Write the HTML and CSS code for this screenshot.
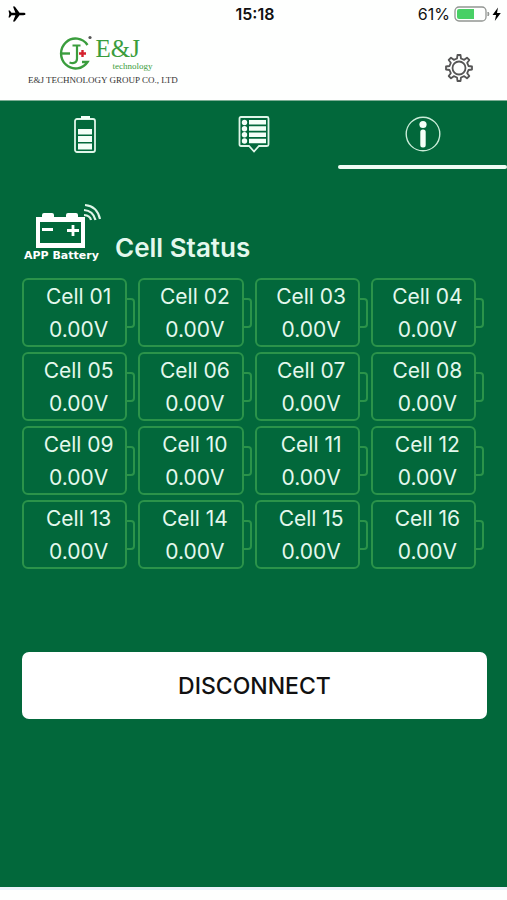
FILE: index.html
```html
<!DOCTYPE html>
<html lang="en">
<head>
<meta charset="utf-8">
<meta name="viewport" content="width=device-width, initial-scale=1">
<title>Cell Status</title>
<link rel="stylesheet" href="styles.css">
</head>
<body>
<div class="status-bar">
  <svg class="plane" viewBox="0 0 18 18" width="18" height="18" aria-label="Airplane mode"><path d="M17.5 9c0-.8-1-1.2-2-1.2h-4L6.800 1.500H5l2.400 6.300H3.500L1.800 5.500H.5L1.300 9 .5 12.500h1.300l1.700-2.300h3.900L5 16.500h1.800l4.700-6.300h4c1 0 2-.4 2-1.200z"/></svg>
  <span class="time">15:18</span>
  <span class="power">
    <span>61%</span>
    <svg viewBox="0 0 48 18" width="48" height="18" aria-label="Charging">
      <rect x="1" y="2" width="31" height="14" rx="4" fill="none" stroke="#929692" stroke-width="1.300"/>
      <path d="M3 6q0-2 2-2h15v10H5q-2 0-2-2z" fill="#48d065"/>
      <path d="M34 7q2 2 0 4z" fill="#929692" stroke="#929692"/>
      <path d="M44 2.500L38.500 10h3.600l-1.300 6 6-8h-3.800z"/>
    </svg>
  </span>
</div>
<header class="header">
  <div class="brand">
    <div class="brand-top">
      <svg viewBox="0 0 34 36" width="34" height="36" aria-hidden="true">
        <g fill="none" stroke="#3a9d3d" stroke-width="2.400">
          <path d="M28.500 10A14.500 15 0 1 0 28.500 27H23"/>
          <path d="M2 18.500h9"/>
          <path d="M13.500 10.500h8M18 10.500v13c0 4-3 5.500-7.500 4" stroke-width="2.200"/>
        </g>
        <path d="M20 18.500h7M23.500 15v7" stroke="#d4212d" stroke-width="2.400"/>
        <circle cx="31" cy="2.500" r="1.600" fill="#555"/>
      </svg>
      <div class="brand-name"><span class="ej">E&amp;J</span><span class="tech">technology</span></div>
    </div>
    <div class="company">E&amp;J TECHNOLOGY GROUP CO., LTD</div>
  </div>
  <button class="settings" type="button" aria-label="Settings">
    <svg viewBox="0 0 28 28" width="28" height="28" fill="none" stroke="#555" stroke-width="1.800" stroke-linejoin="round">
      <path d="M12 4.500L12.500 1h3l.5 3.500 3.200 1.300L22 3.700 24.300 6l-2.100 2.800L23.500 12l3.500.5v3l-3.500.5-1.300 3.200 2.100 2.800-2.300 2.300-2.800-2.100-3.200 1.300-.5 3.500h-3l-.5-3.500-3.200-1.300L6 24.300 3.700 22l2.100-2.800L4.500 16 1 15.500v-3l3.500-.5 1.300-3.200L3.700 6 6 3.700l2.800 2.100z"/>
      <circle cx="14" cy="14" r="6.500"/>
    </svg>
  </button>
</header>
<main class="main">
  <nav class="tabs">
    <a class="tab" href="#battery" aria-label="Battery">
      <svg viewBox="0 0 22 38" width="22" height="38" fill="#f4fff8">
        <rect x="1" y="4" width="20" height="33" rx="2" fill="none" stroke="#dff5e8" stroke-width="1.800"/>
        <path d="M7 1h9v3H7zM4 14h14v5.500H4zM4 21h14v6H4zM4 28.500h14v6H4z"/>
      </svg>
    </a>
    <a class="tab" href="#list" aria-label="Details">
      <svg viewBox="0 0 32 38" width="32" height="38" fill="#f4fff8">
        <path d="M3 2h26q1.500 0 1.500 1.500v26q0 1.500-1.500 1.500h-8l-5 5.500-5-5.500H3q-1.500 0-1.500-1.500v-26Q1.500 2 3 2z" fill="none" stroke="#dff5e8" stroke-width="1.800"/>
        <path d="M11 5h17v4.500H11zM11 11.300h17v4.500H11zM11 17.500h17V22H11zM11 23.800h17v4.500H11z"/>
        <circle cx="6.500" cy="7.500" r="2.700"/><circle cx="6.500" cy="13.700" r="2.700"/><circle cx="6.500" cy="19.800" r="2.700"/><circle cx="6.500" cy="26" r="2.700"/>
      </svg>
    </a>
    <a class="tab tab-active" href="#info" aria-label="Information" aria-current="page">
      <svg viewBox="0 0 36 36" width="36" height="36">
        <circle cx="18" cy="18" r="16.800" fill="none" stroke="#c9ecd8" stroke-width="1.400"/>
        <circle cx="18" cy="8.500" r="3.600" fill="#f4fff8"/>
        <rect x="15.300" y="13.500" width="5.400" height="18" rx="2.500" fill="#f4fff8"/>
      </svg>
    </a>
  </nav>
  <section class="panel">
    <div class="heading">
      <div class="app-logo">
        <svg viewBox="0 0 80 46" width="80" height="46" aria-hidden="true">
          <path d="M14 14h6v-2q0-2 2-2h8q2 0 2 2v2h12v-2q0-2 2-2h8q2 0 2 2v2h7v31H14z" fill="#fff"/>
          <path d="M18 19h41v21H18z" fill="#02683b"/>
          <path d="M20 26.500h11M45 27.500h12M51 22v11" stroke="#fff" stroke-width="2.800"/>
          <path d="M62 12q6 .5 7 5M62 7q9 .5 11.500 10M63 2q12 1 15 14" fill="none" stroke="#dff5e8" stroke-width="2.200"/>
        </svg>
        <span>APP Battery</span>
      </div>
      <h1>Cell Status</h1>
    </div>
    <ul class="cells">
      <li class="cell"><div class="body"><span>Cell 01</span><span>0.00V</span></div></li>
      <li class="cell"><div class="body"><span>Cell 02</span><span>0.00V</span></div></li>
      <li class="cell"><div class="body"><span>Cell 03</span><span>0.00V</span></div></li>
      <li class="cell"><div class="body"><span>Cell 04</span><span>0.00V</span></div></li>
      <li class="cell"><div class="body"><span>Cell 05</span><span>0.00V</span></div></li>
      <li class="cell"><div class="body"><span>Cell 06</span><span>0.00V</span></div></li>
      <li class="cell"><div class="body"><span>Cell 07</span><span>0.00V</span></div></li>
      <li class="cell"><div class="body"><span>Cell 08</span><span>0.00V</span></div></li>
      <li class="cell"><div class="body"><span>Cell 09</span><span>0.00V</span></div></li>
      <li class="cell"><div class="body"><span>Cell 10</span><span>0.00V</span></div></li>
      <li class="cell"><div class="body"><span>Cell 11</span><span>0.00V</span></div></li>
      <li class="cell"><div class="body"><span>Cell 12</span><span>0.00V</span></div></li>
      <li class="cell"><div class="body"><span>Cell 13</span><span>0.00V</span></div></li>
      <li class="cell"><div class="body"><span>Cell 14</span><span>0.00V</span></div></li>
      <li class="cell"><div class="body"><span>Cell 15</span><span>0.00V</span></div></li>
      <li class="cell"><div class="body"><span>Cell 16</span><span>0.00V</span></div></li>
    </ul>
    <button class="disconnect" type="button">DISCONNECT</button>
  </section>
</main>
<footer class="footer"></footer>
</body>
</html>
```
FILE: styles.css
```css
*,
*::after {
  box-sizing: border-box;
}

body {
  margin: 0;
  min-height: 100vh;
  display: flex;
  flex-direction: column;
  background: #fefffe;
  color: #111;
  font-family: Inter, "Liberation Sans", sans-serif;
}

svg {
  display: block;
  flex: none;
}

.status-bar {
  display: grid;
  grid-template-columns: 1fr auto 1fr;
  align-items: center;
  height: 28px;
  padding: 0 5px 0 8px;
  font-size: 16px;
}

.time {
  font-weight: 600;
}

.power {
  display: flex;
  justify-content: flex-end;
  align-items: center;
  gap: 4px;
}

.header {
  display: flex;
  justify-content: space-between;
  align-items: center;
  height: 72px;
  padding: 0 34px 0 28px;
}

.brand {
  display: flex;
  flex-direction: column;
  align-items: center;
  font-family: "Liberation Serif", serif;
  padding-bottom: 8px;
}

.brand-top {
  display: flex;
  gap: 2px;
  padding-left: 6px;
  color: #3a9d3d;
}

.brand-name {
  display: flex;
  flex-direction: column;
}

.ej {
  font-size: 25px;
  line-height: 28px;
}

.tech {
  margin: -2px 0 0 17px;
  font-size: 9px;
  line-height: 10px;
}

.company {
  margin-top: 4px;
  font-size: 9px;
  line-height: 10px;
  color: #333;
  white-space: nowrap;
}

.settings {
  padding: 0;
  margin-top: 8px;
  border: 0;
  background: none;
}

.main {
  flex: 1;
  background: #02683b;
  border-top: 1px solid #7cad94;
}

.tabs {
  display: grid;
  grid-template-columns: repeat(3, 1fr);
}

.tab {
  display: flex;
  justify-content: center;
  align-items: center;
  height: 68px;
  border-bottom: 2px solid transparent;
}

.tab-active {
  position: relative;
}

.tab-active::after {
  content: "";
  position: absolute;
  left: 0;
  right: 0;
  bottom: -2px;
  height: 4px;
  border-radius: 2px;
  background: #effcf4;
}

.panel {
  padding: 36px 20px 48px 22px;
  color: #e4f8ed;
}

.heading {
  display: flex;
  align-items: flex-end;
  gap: 13px;
  height: 58px;
}

.app-logo {
  display: flex;
  flex-direction: column;
  font: 700 11px/14px "DejaVu Sans", sans-serif;
  color: #fff;
}

.app-logo span {
  padding-left: 2px;
}

h1 {
  margin: 0;
  font-size: 26px;
  line-height: 30px;
  font-weight: 600;
}

.cells {
  display: grid;
  grid-template-columns: repeat(4, 1fr);
  row-gap: 5px;
  margin: 15px 0 0;
  padding: 0;
  list-style: none;
}

.cell {
  display: flex;
  align-items: center;
  padding-right: 3px;
}

.cell::after {
  content: "";
  width: 8px;
  height: 30px;
  border: 2px solid #2b934a;
  border-left: 0;
  border-radius: 0 4px 4px 0;
}

.body {
  flex: 1;
  display: flex;
  flex-direction: column;
  align-items: center;
  height: 69px;
  padding-left: 8px;
  border: 2px solid #2b934a;
  border-radius: 6px;
  font-size: 21px;
  line-height: 33px;
}

.disconnect {
  display: block;
  width: 100%;
  height: 67px;
  margin-top: 83px;
  border: 0;
  border-radius: 7px;
  background: #fff;
  color: #111;
  font: 500 23px/28px Inter, "Liberation Sans", sans-serif;
}

.footer {
  height: 13px;
  border-top: 3px solid #edf3fb;
}
```
